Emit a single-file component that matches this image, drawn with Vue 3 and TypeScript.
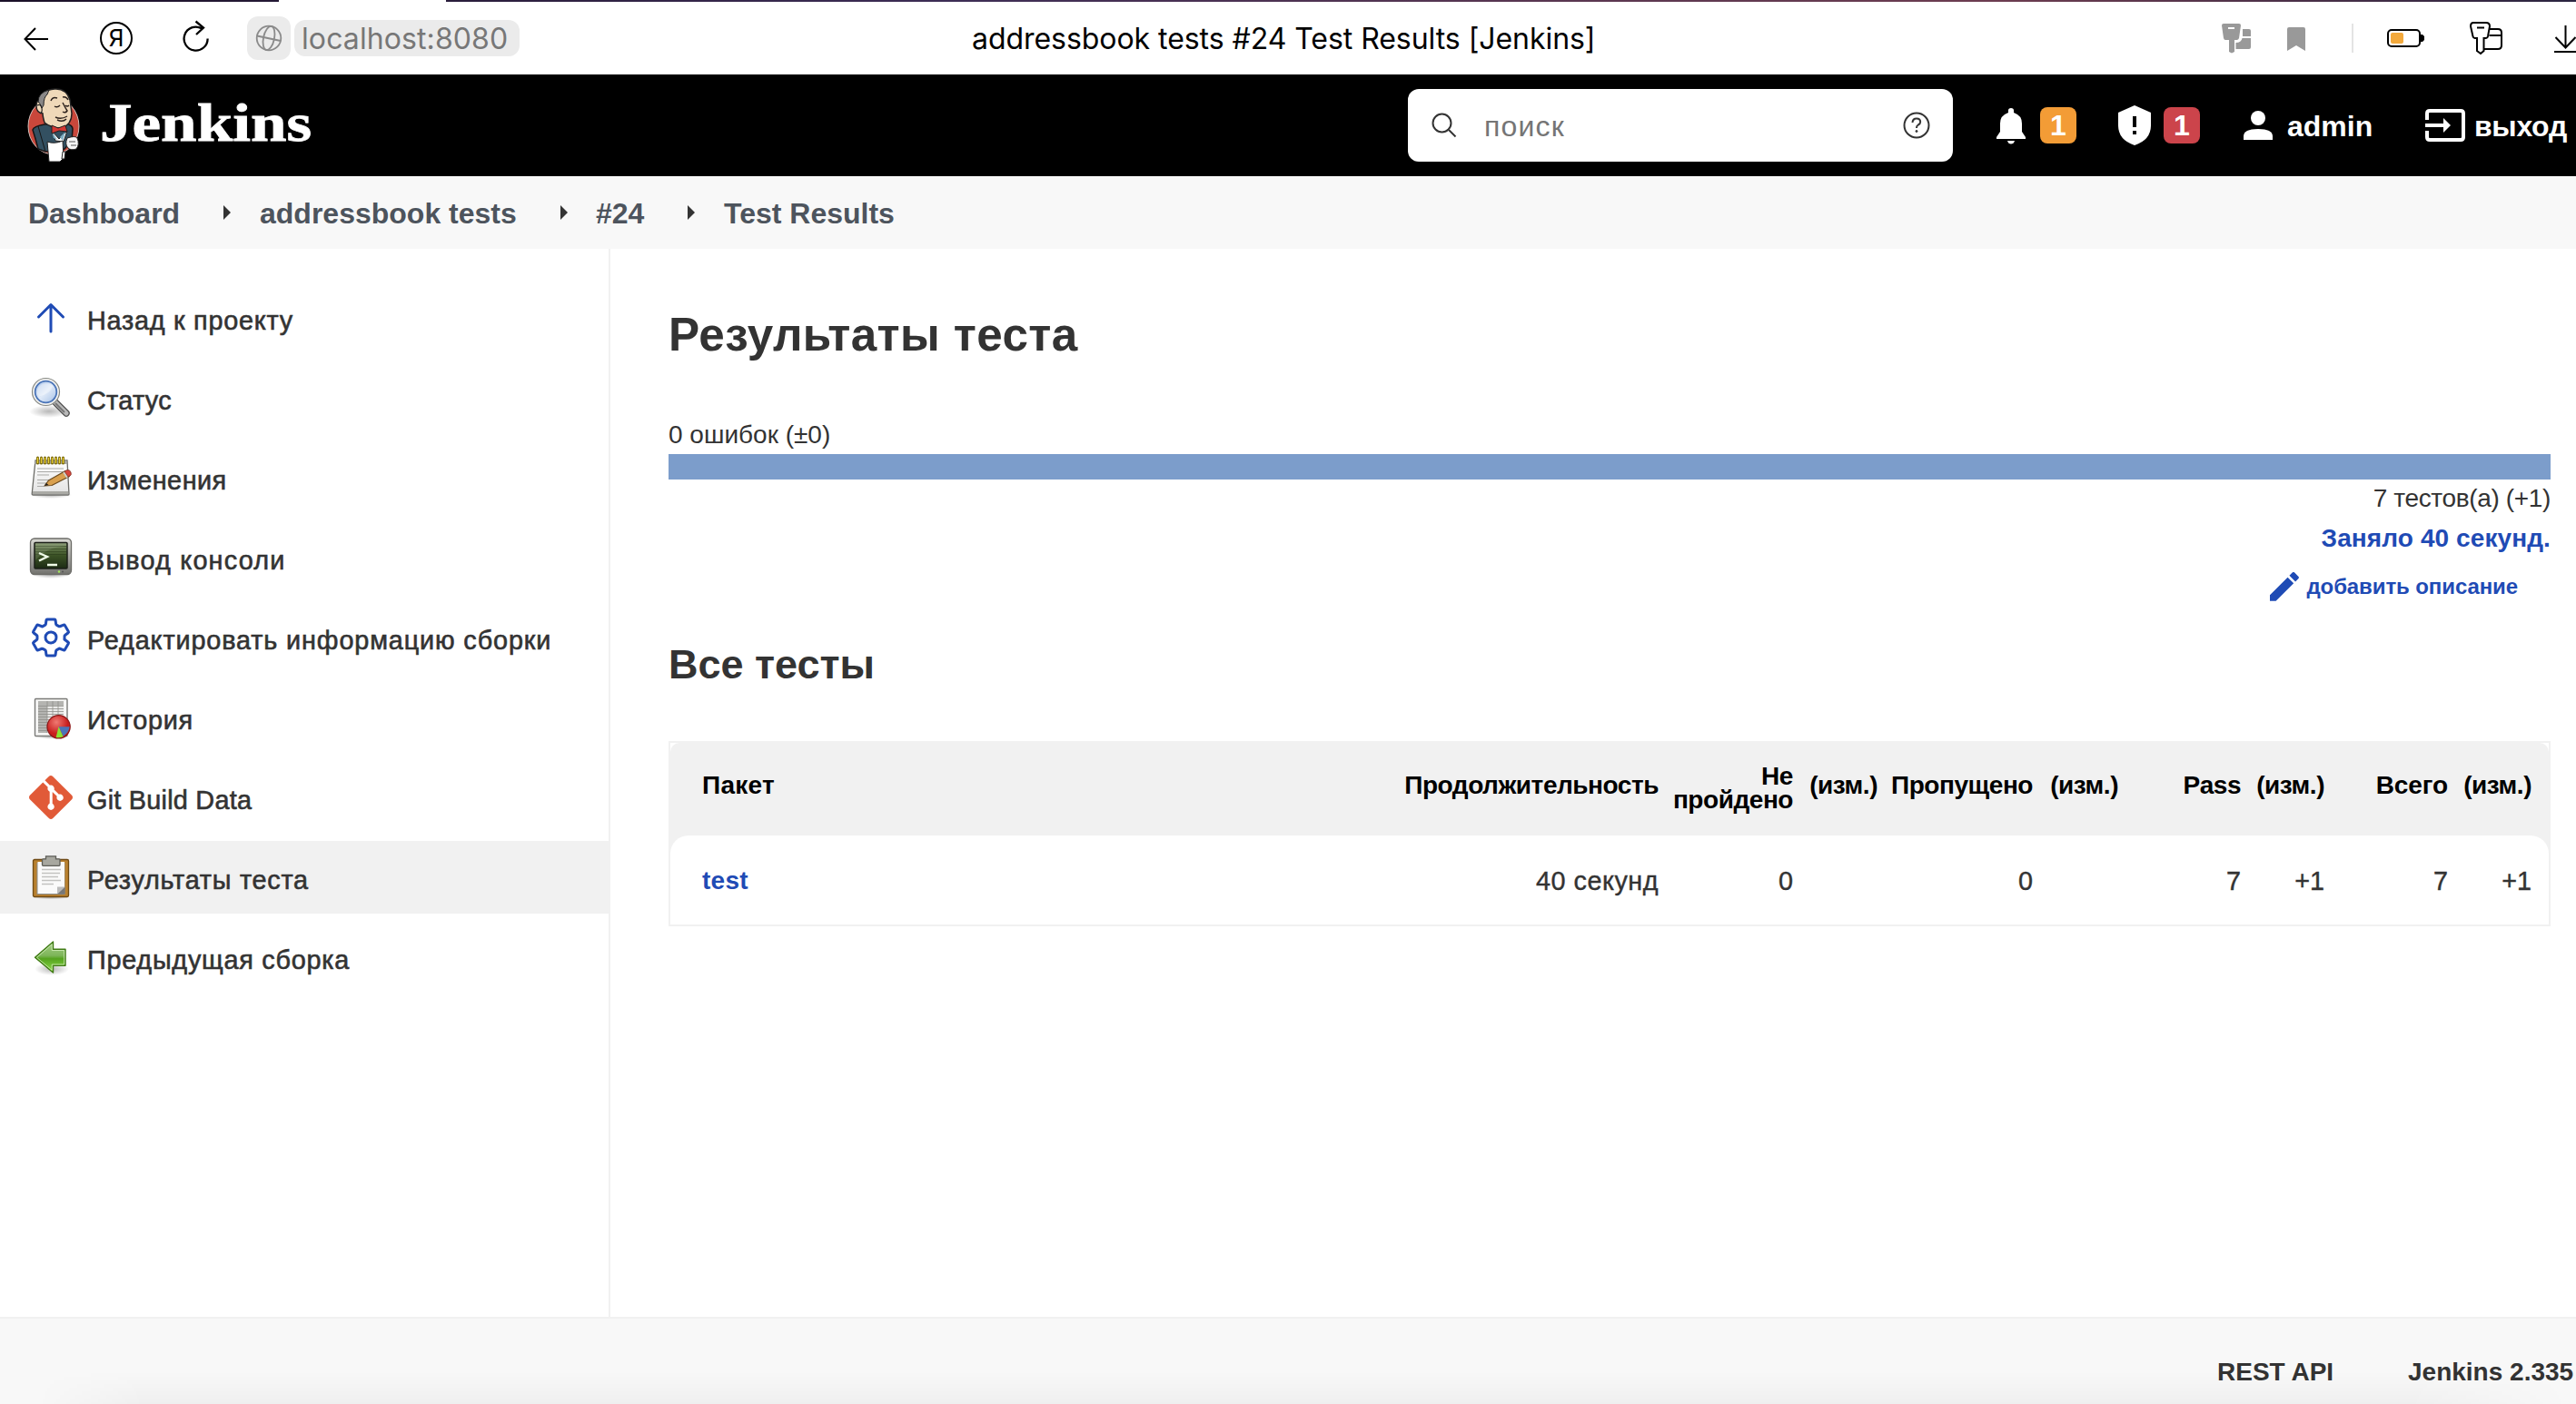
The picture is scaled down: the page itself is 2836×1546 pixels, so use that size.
<script setup lang="ts">
interface Task { id: string; label: string; active?: boolean }

const tasks: Task[] = [
  { id: 'up', label: 'Назад к проекту' },
  { id: 'search', label: 'Статус' },
  { id: 'notepad', label: 'Изменения' },
  { id: 'terminal', label: 'Вывод консоли' },
  { id: 'gear', label: 'Редактировать информацию сборки' },
  { id: 'graph', label: 'История' },
  { id: 'git', label: 'Git Build Data' },
  { id: 'clipboard', label: 'Результаты теста', active: true },
  { id: 'previous', label: 'Предыдущая сборка' },
]

const crumbs: string[] = ['Dashboard', 'addressbook tests', '#24', 'Test Results']
const heads: string[] = ['Пакет', 'Продолжительность', 'Не пройдено', '(изм.)', 'Пропущено', '(изм.)', 'Pass', '(изм.)', 'Всего', '(изм.)']
const row: string[] = ['test', '40 секунд', '0', '', '0', '', '7', '+1', '7', '+1']
</script>

<template>
  <div class="page">
    <div class="browser">
      <div class="strip"><i class="tab"></i></div>
      <svg class="b-back" width="28" height="26" viewBox="0 0 28 26"><path d="M27 13H2M13 1 1.500 13 13 25" fill="none" stroke="#000" stroke-width="2" /></svg>
      <div class="ya"><span>Я</span></div>
      <svg class="b-reload" width="30" height="36" viewBox="0 0 30 36"><path d="M27.600 20.500A13 13 0 1 1 21 9.300M14.500 1.500 23 8.500 15 16" fill="none" stroke="#000" stroke-width="2.300" /></svg>
      <div class="globe">
        <svg width="30" height="30" viewBox="0 0 30 30" fill="none" stroke="#8a8a8a" stroke-width="1.800"><circle cx="15" cy="15" r="13.300" /><ellipse cx="15" cy="15" rx="6" ry="13.300" transform="rotate(12 15 15)" /><path d="M2 12.500 28 18" /></svg>
      </div>
      <div class="url"><span>localhost:8080</span></div>
      <div class="title"><span>addressbook tests #24 Test Results [Jenkins]</span></div>
      <svg class="b-key" width="34" height="34" viewBox="0 0 34 34" fill="#999"><path fill-rule="evenodd" d="M3 1h17q2 0 2 2l-2 14q-.5 1.500-2 2h-3v13l-3 1.500-3-1.500V19H5q-1.500 0-2-2L1 3q0-2 2-2ZM8 5v2h7V5Z" /><path d="M24 7h7q2 0 2 2v6h-9zM16.500 22q6 0 7-5H33v10q0 2-2 2H16.500z" /></svg>
      <svg class="b-mark" width="20" height="26" viewBox="0 0 20 26"><path d="M2 0h16q2 0 2 2v24L10 20 0 26V2Q0 0 2 0Z" fill="#999" /></svg>
      <i class="b-div"></i>
      <svg class="b-bat" width="42" height="20" viewBox="0 0 42 20"><rect x="1" y="1" width="35" height="18" rx="4" fill="none" stroke="#000" stroke-width="2" /><rect x="4" y="4" width="14" height="12" rx="2" fill="#f3a93c" /><path d="M36 6h3l2 2v4l-2 2h-3z" /></svg>
      <svg class="b-keys" width="38" height="38" viewBox="0 0 38 38" fill="none" stroke="#000" stroke-width="2"><path d="M4 2h14q4 0 4 4l-2 11q-.5 2-2 2h-2.500v14L12 36l-4-3V19H5.500q-1.500 0-2-2L1 6q0-4 3-4ZM8 7.500h8" /><path d="M22 9h9q4 0 4 4v14q0 4-4 4H15.500M21.500 16H35" /></svg>
      <svg class="b-down" width="24" height="32" viewBox="0 0 24 32" fill="none" stroke="#000" stroke-width="2"><path d="M12.500 1v24M1.500 14l11 11.500L23.500 14M0 30h24" /></svg>
    </div>

    <header class="top">
      <svg class="butler" width="58" height="82" viewBox="0 0 58 82">
        <ellipse cx="29" cy="42" rx="28" ry="31" fill="#c9473b" stroke="#e9e4e0" stroke-width=".8" />
        <path d="M12 67Q9 55 6 46q1-4 13-6l24-1q7 2 7 6l-1 13-8 9-21 3Z" fill="#335061" stroke="#161616" stroke-width="1.500" />
        <path d="m12 42 8 28" stroke="#161616" fill="none" />
        <path d="M19 38Q17 31 17 28q-7-1-7-8 0-6 3-6Q15 2 30 1q13-1 17 12 1 7 2 15 0 12-11 16-12 0-19-6Z" fill="#efd9b9" stroke="#222" stroke-width="1.500" />
        <path d="M12 15Q12 5 24 2l-2 5q-4 3-4 12l-2 3q-2-6-4-7Z" fill="#8a8887" stroke="#222" />
        <path d="M11 19q4-2 5 3t-2 6" fill="none" stroke="#222" stroke-width="1.200" />
        <path d="M26 14q2-5 7-3M39 10q4-1 6 3M30 20q3 2 6-1M42 19q2 2 4 0M39 16q3 6 5 9-2 3-5 1M31 32q6 3 13-1M33 35q6 3 10-1" fill="none" stroke="#2b211c" stroke-width="1.400" />
        <path d="m27 47 8 9 9-9-4 12-9-1Z" fill="#f4f4f4" stroke="#222" /><path d="m27 48 6 9-4-2Z" fill="#81b0c4" /><path d="m42 48-3 10-3-4Z" fill="#81b0c4" />
        <path d="m27 41 7 3 8-3 2 7-9-1-8 3Z" fill="#d33833" stroke="#222" />
        <path d="M22 59q8 3 17-1l1 19-4 4H24Z" fill="#fff" stroke="#222" /><path d="M39 70h3l-1 8h-3zM44 55q9-3 11 0 3 7-1 12-6 2-9-1-4-4-1-11Z" fill="#f6f6f6" stroke="#222" /><path d="M46 59h7M48 63h6" stroke="#555" />
      </svg>
      <div class="brand"><span>Jenkins</span></div>
      <div class="search">
        <svg class="s-glass" width="28" height="28" viewBox="0 0 28 28" fill="none" stroke="#333" stroke-width="2"><circle cx="11.500" cy="11.500" r="10" /><path d="m19 19 7.500 7.500" /></svg>
        <span class="ph">поиск</span>
        <svg class="s-help" width="32" height="32" viewBox="0 0 32 32" fill="none" stroke="#333" stroke-width="2"><circle cx="16" cy="16" r="13.500" /><path d="M11.500 13q.3-4.500 4.500-4.500 4.200 0 4.200 3.700 0 2-2.400 3.300-1.900 1.100-1.800 3.500" /><circle cx="16" cy="22.500" r="1" fill="#333" stroke-width="1" /></svg>
      </div>
      <svg class="bell" width="32" height="40" viewBox="0 0 32 40" fill="#fff"><path d="M13 5V2.500q0-2.500 3-2.500t3 2.500V5q9 3 9 12v9l4 6v2H0v-2l4-6v-9Q4 8 13 5ZM12 36h8q-1 3.500-4 3.500T12 36Z" /></svg>
      <span class="badge orange">1</span>
      <svg class="shield" width="36" height="44" viewBox="0 0 36 44"><path d="M18 0 36 8v14q0 16-18 22Q0 38 0 22V8Z" fill="#fff" /><path d="M16 12h4v12h-4zM16 28h4v4h-4z" /></svg>
      <span class="badge red">1</span>
      <svg class="user" width="32" height="32" viewBox="0 0 32 32" fill="#fff"><circle cx="16" cy="8" r="8" /><path d="M0 32v-4q0-8 16-8t16 8v4Z" /></svg>
      <span class="who">admin</span>
      <svg class="exit" width="44" height="36" viewBox="0 0 44 36"><path d="M2 12V5q0-3 3-3h34q3 0 3 3v26q0 3-3 3H5q-3 0-3-3v-7M0 18h22" fill="none" stroke="#fff" stroke-width="4" /><path d="m20 10 8 8-8 8Z" fill="#fff" /></svg>
      <span class="out">выход</span>
    </header>

    <nav class="crumbs">
      <template v-for="(c, i) in crumbs" :key="c">
        <i v-if="i" class="caret"></i>
        <span class="crumb" :class="'c' + i">{{ c }}</span>
      </template>
    </nav>

    <div class="body">
      <aside>
        <div v-for="t in tasks" :key="t.id" class="task" :class="[t.id, { active: t.active }]">
          <svg width="48" height="48" viewBox="0 0 48 48">
            <defs>
              <linearGradient id="lens" x1="0" y1="0" x2="1" y2="1"><stop offset="0" stop-color="#a9c3e8" /><stop offset=".5" stop-color="#e0eaf8" /><stop offset="1" stop-color="#a4c0e6" /></linearGradient>
              <linearGradient id="paper" x1="0" y1="0" x2="0" y2="1"><stop offset="0" stop-color="#fff" /><stop offset="1" stop-color="#e2e2e2" /></linearGradient>
              <linearGradient id="frame" x1="0" y1="0" x2="0" y2="1"><stop offset="0" stop-color="#d8d8d2" /><stop offset="1" stop-color="#72726e" /></linearGradient>
              <linearGradient id="screen" x1="0" y1="0" x2="0" y2="1"><stop offset="0" stop-color="#7f9468" /><stop offset=".5" stop-color="#3b5225" /><stop offset="1" stop-color="#1c2b14" /></linearGradient>
              <linearGradient id="green" x1="0" y1="0" x2="0" y2="1"><stop offset="0" stop-color="#a8cf8c" /><stop offset=".45" stop-color="#7db558" /><stop offset=".55" stop-color="#55a31f" /><stop offset="1" stop-color="#8fe04a" /></linearGradient>
              <radialGradient id="shade"><stop offset="0" stop-color="#000" stop-opacity=".28" /><stop offset="1" stop-color="#000" stop-opacity="0" /></radialGradient>
              <radialGradient id="pie" cx=".4" cy=".3"><stop offset="0" stop-color="#ef7a72" /><stop offset="1" stop-color="#c81e1e" /></radialGradient>
            </defs>
            <path v-if="t.id === 'up'" d="M10.500 23 24 9.500 37.500 23M24 10v29" fill="none" stroke="#1f4bb5" stroke-width="3" stroke-linecap="round" stroke-linejoin="round" />
            <g v-else-if="t.id === 'search'">
              <ellipse cx="22" cy="39" rx="22" ry="7" fill="url(#shade)" />
              <path d="m29 29 12 12" stroke="#555" stroke-width="7.500" stroke-linecap="round" /><path d="m29 29 12 12" stroke="#b9b9b9" stroke-width="5" stroke-linecap="round" /><path d="m29 30 10 10" stroke="#777" stroke-width="2" />
              <circle cx="18.500" cy="17.500" r="15" fill="#f3f3f1" stroke="#888a85" stroke-width="1.200" /><circle cx="18.500" cy="17.500" r="11.800" fill="url(#lens)" stroke="#4a74b8" stroke-width="1.800" />
              <path d="M9 18q0-9 9-9.500 7 0 8 3-2 8-15 11-2-2-2-4.500Z" fill="#fff" opacity=".35" />
            </g>
            <g v-else-if="t.id === 'notepad'">
              <ellipse cx="24" cy="43" rx="23" ry="4" fill="url(#shade)" />
              <path d="M7 5h35l2 37q0 1-1 1H4.500q-1.500 0-1.300-1.500Z" fill="url(#paper)" stroke="#6d6d69" stroke-width="1.300" /><path d="M6.500 5.500h35.500v3.500H6.300Z" fill="#a5a59f" /><path d="M4 39h39v3H4Z" fill="#aaaaa5" />
              <path d="M9 14h29M9 17.500h29M9 21h13M9 26.500h22M9 30h20M9 33.500h8" stroke="#a9a9a6" stroke-width="1" />
              <path d="M9.500 2v6M13.500 2v6M17.500 2v6M21.500 2v6M25.500 2v6M29.500 2v6M33.500 2v6M37.500 2v6" stroke="#7d6a08" stroke-width="3" stroke-linecap="round" /><path d="M9.500 2v6M13.500 2v6M17.500 2v6M21.500 2v6M25.500 2v6M29.500 2v6M33.500 2v6M37.500 2v6" stroke="#e7cf3c" stroke-width="1.300" />
              <path d="m17 33 4.500-6L40 16.500l4.500 6L25 32.500Z" fill="#d9a04e" stroke="#6b4a1e" stroke-width="1.200" stroke-linejoin="round" /><path d="m39 17 3-1.500q3-.5 4 2.500t-1 4l-2 1Z" fill="#d8453c" stroke="#7c3324" stroke-width=".8" /><path d="m38 18 4 6" stroke="#ccc" stroke-width="1.800" /><path d="m17 33 2-3 2.500 2Z" fill="#222" />
            </g>
            <g v-else-if="t.id === 'terminal'">
              <ellipse cx="24" cy="43" rx="21" ry="4" fill="url(#shade)" />
              <rect x="1.500" y="3" width="45" height="39.500" rx="4.500" fill="url(#frame)" stroke="#6b6b67" stroke-width="1.300" />
              <rect x="6" y="7.500" width="36" height="28.500" rx="1" fill="url(#screen)" stroke="#1b1f18" stroke-width="1.500" />
              <path d="M7 11.500h34M7 14.500h34M7 17.500h34M7 20.500h34" stroke="#233514" stroke-width=".8" opacity=".6" /><path d="M7 27Q20 12 41 11V8H7Z" fill="#fff" opacity=".1" />
              <path d="m11 19 9 4-9 4.500M20 32h11" fill="none" stroke="#effbe8" stroke-width="2.400" /><circle cx="33" cy="39.500" r="1.200" fill="#a5ea5a" /><circle cx="37" cy="39.500" r="1" fill="#555" />
            </g>
            <svg v-else-if="t.id === 'gear'" width="48" height="48" viewBox="0 0 512 512" fill="none" stroke="#1f4bb5" stroke-width="32" stroke-linecap="round" stroke-linejoin="round"><path d="M262.290 192.310a64 64 0 1057.400 57.400 64.130 64.130 0 00-57.400-57.400zM416.390 256a154.340 154.340 0 01-1.530 20.790l45.210 35.460a10.810 10.810 0 012.450 13.750l-42.770 74a10.810 10.810 0 01-13.140 4.590l-44.900-18.080a16.110 16.110 0 00-15.170 1.750A164.480 164.480 0 01325 400.800a15.940 15.940 0 00-8.820 12.140l-6.730 47.890a11.080 11.080 0 01-10.680 9.170h-85.540a11.110 11.110 0 01-10.690-8.870l-6.720-47.820a16.070 16.070 0 00-9-12.220 155.300 155.300 0 01-21.460-12.570 16 16 0 00-15.110-1.710l-44.890 18.070a10.810 10.810 0 01-13.140-4.580l-42.770-74a10.800 10.800 0 012.450-13.750l38.210-30a16.050 16.050 0 006-14.080c-.36-4.170-.58-8.330-.58-12.500s.21-8.270.58-12.350a16 16 0 00-6.070-13.940l-38.190-30A10.810 10.810 0 0149.480 186l42.770-74a10.810 10.810 0 0113.140-4.590l44.900 18.080a16.110 16.110 0 0015.170-1.750A164.480 164.480 0 01187 111.200a15.940 15.940 0 008.820-12.140l6.730-47.890A11.080 11.080 0 01213.230 42h85.540a11.110 11.110 0 0110.690 8.870l6.720 47.820a16.070 16.070 0 009 12.220 155.300 155.300 0 0121.460 12.570 16 16 0 0015.110 1.710l44.890-18.070a10.810 10.810 0 0113.140 4.580l42.770 74a10.800 10.800 0 01-2.450 13.750l-38.210 30a16.050 16.050 0 00-6.050 14.080c.33 4.140.55 8.300.55 12.470z" /></svg>
            <g v-else-if="t.id === 'graph'">
              <ellipse cx="26" cy="45" rx="19" ry="3" fill="url(#shade)" />
              <rect x="6.500" y="3.500" width="35.500" height="41" rx="1" fill="#f6f6f5" stroke="#7b7b78" stroke-width="1.400" />
              <rect x="10" y="6" width="28" height="35" fill="#e9e9e7" /><path d="M10 6h28v5H10zM10 6h10v35H10z" fill="#b4b4b1" />
              <path d="M10 11.500h28M10 14.500h28M10 17.500h28M10 20.500h28M10 23.500h28M10 26.500h28M10 29.500h28M10 32.500h28M10 35.500h28M10 38.500h28M20 6v35M26 6v35M32 6v35" stroke="#8f8f8c" stroke-width=".8" />
              <circle cx="32.600" cy="34.300" r="12.600" fill="url(#pie)" stroke="#8a1414" stroke-width="1.200" /><path d="M32.600 34.300h12q-.5 6-7 10.500Z" fill="#4a74b8" /><path d="m32.600 34.300 5 11q-4 1.500-8 .8Z" fill="#8ae234" />
            </g>
            <path v-else-if="t.id === 'git'" transform="scale(2)" fill="#e15a38" d="M23.546 10.930L13.067.452c-.604-.603-1.582-.603-2.188 0L8.708 2.627l2.760 2.760c.645-.215 1.379-.070 1.889.441.516.515.658 1.258.438 1.900l2.658 2.660c.645-.223 1.387-.078 1.900.435.721.72.721 1.884 0 2.604-.719.719-1.881.719-2.600 0-.539-.541-.674-1.337-.404-1.996L12.860 8.955v6.525c.176.086.342.203.488.348.713.721.713 1.883 0 2.600-.719.721-1.889.721-2.609 0-.719-.719-.719-1.879 0-2.598.182-.18.387-.316.605-.406V8.835c-.217-.091-.424-.222-.6-.401-.545-.545-.676-1.342-.396-2.009L7.636 3.700.45 10.881c-.6.605-.6 1.584 0 2.189l10.480 10.477c.604.604 1.582.604 2.186 0l10.430-10.430c.605-.603.605-1.582 0-2.187" />
            <g v-else-if="t.id === 'clipboard'">
              <ellipse cx="24" cy="46" rx="20" ry="2.500" fill="url(#shade)" />
              <rect x="4.500" y="4.500" width="39" height="41" rx="1.500" fill="#b9812f" stroke="#6f4a14" stroke-width="1.300" />
              <path d="M8.500 8h31v35h-31Z" fill="#8b8b88" /><path d="M9.500 7h29.500v35H9.500Z" fill="#fafafa" />
              <path d="M31 34.500h8.500L31 42.500Z" fill="#bbb" /><path d="M39.500 34.500v8H31Z" fill="#777" />
              <path d="M14 15.500h21M14 19.500h20M14 23.500h18M14 27.500h21M14 31.500h13" stroke="#c2c2c0" stroke-width="1.600" />
              <path d="M18.500.8h11v3h3.500q1 0 1 1v5.500q0 1-1 1H15.500q-1 0-1-1V4.800q0-1 1-1h3Z" fill="#a8a8a0" stroke="#5e5e58" stroke-width="1.300" />
            </g>
            <g v-else>
              <ellipse cx="25" cy="37" rx="19" ry="7" fill="url(#shade)" />
              <path d="M6.500 24.300 26.500 7v8.200H40v18H26.500V41Z" fill="url(#green)" stroke="#3f7a14" stroke-width="1.400" stroke-linejoin="round" /><path d="M8.500 24.300 25.200 9.800v6.700h13.500v15.500H25.200v6.300Z" fill="none" stroke="#d3f0ba" stroke-width="1" opacity=".8" />
            </g>
          </svg>
          <span>{{ t.label }}</span>
        </div>
      </aside>

      <main>
        <h1><span>Результаты теста</span></h1>
        <div class="fails"><span>0 ошибок (±0)</span></div>
        <div class="bar"></div>
        <div class="total"><span>7 тестов(а) (+1)</span></div>
        <div class="took"><span>Заняло 40 секунд.</span></div>
        <div class="desc">
          <svg width="32" height="32" viewBox="3 3 18.100 18.100" fill="#1f4bb5"><path d="M3 17.250V21h3.750L17.810 9.940l-3.750-3.750L3 17.250zM20.710 7.040a1 1 0 0 0 0-1.410l-2.340-2.340a1 1 0 0 0-1.410 0l-1.830 1.830 3.750 3.750 1.830-1.830z" /></svg>
          <span>добавить описание</span>
        </div>
        <h2><span>Все тесты</span></h2>
        <div class="table">
          <div class="thead grid"><div v-for="(h, i) in heads" :key="i" class="cell"><span>{{ h }}</span></div></div>
          <div class="trow grid"><div v-for="(v, i) in row" :key="i" class="cell"><span>{{ v }}</span></div></div>
        </div>
      </main>
    </div>

    <footer>
      <span class="rest">REST API</span><span class="ver">Jenkins 2.335</span>
      <i class="glow"></i>
    </footer>
  </div>
</template>

<style>
body { margin: 0; background: #fff; }
</style>

<style scoped>
* { box-sizing: border-box; }
.page { width: 2836px; height: 1546px; overflow: hidden; display: flex; flex-direction: column; font-family: "Liberation Sans", Arial, sans-serif; color: #333; white-space: nowrap; }
svg { display: block; flex: none; }
.browser { position: relative; flex: none; height: 82px; display: flex; align-items: flex-start; font-family: Inter, sans-serif; background: #fff; }
.strip { position: absolute; left: 0; top: 0; width: 100%; height: 2px; background: linear-gradient(90deg, #1a1028 0, #2a1d3c 500px, #3d2d55 1040px, #5d3850 1800px, #6d3d50 2200px, #2a2440 2836px); }
.tab { display: block; width: 184px; height: 2px; margin-left: 307px; background: #fff; }
.b-back { margin: 30px 0 0 26px; }
.ya { width: 36px; height: 36px; margin: 24px 0 0 56px; border: 2px solid #000; border-radius: 50%; display: flex; justify-content: center; font: 26px/31px Inter, sans-serif; color: #000; }
.b-reload { margin: 22px 0 0 55px; }
.globe { width: 48px; height: 48px; margin: 18px 0 0 41px; border-radius: 12px; background: #ebebeb; display: flex; align-items: center; justify-content: center; }
.url { width: 248px; height: 40px; margin: 22px 0 0 4px; border-radius: 12px; background: #ebebeb; color: #777; font-size: 32px; line-height: 42px; padding-left: 8px; letter-spacing: .1px; }
.title { width: 699px; margin: 22px 0 0 498px; font-size: 32px; line-height: 42px; color: #000; letter-spacing: -.05px; }
.b-key { margin: 25px 0 0 676px; }
.b-mark { margin: 30px 0 0 39px; }
.b-div { width: 2px; height: 32px; margin: 26px 0 0 51px; background: #e4e4e4; }
.b-bat { margin: 32px 0 0 37px; }
.b-keys { margin: 23px 0 0 49px; }
.b-down { margin: 27px 0 0 55px; }

.top { flex: none; height: 112px; background: #000; color: #fff; display: flex; align-items: flex-start; font-size: 32px; font-weight: 700; }
.butler { margin: 15px 0 0 30px; }
.brand { width: 1439px; padding-left: 22px; font: 700 60px/80px "Liberation Serif", serif; margin-top: 13px; }
.brand span { display: inline-block; transform: scaleX(1.185); transform-origin: 0 50%; -webkit-text-stroke: .8px #fff; }
.search { width: 600px; height: 80px; margin: 16px 0 0 23px; border-radius: 12px; background: #fff; display: flex; align-items: center; font-weight: 400; }
.s-glass { margin-left: 26px; }
.ph { width: 490px; padding-left: 30px; line-height: 80px; color: #757575; padding-top: 2px; letter-spacing: 1.2px; }
.bell { margin: 37px 0 0 48px; }
.badge { width: 40px; height: 40px; margin: 36px 0 0 16px; border-radius: 8px; text-align: center; line-height: 41px; }
.orange { background: #f39c36; }
.red { background: #cc444b; margin-left: 14px; }
.shield { margin: 34px 0 0 46px; }
.user { margin: 40px 0 0 48px; }
.who { width: 152px; padding-left: 16px; line-height: 114px; }
.exit { margin: 38px 0 0 16px; }
.out { padding-left: 10px; line-height: 114px; letter-spacing: -.3px; }

.crumbs { flex: none; height: 80px; background: #f8f8f8; display: flex; align-items: center; font-size: 32px; font-weight: 700; color: #4d545d; }
.crumb { line-height: 80px; padding-top: 2px; }
.c0 { padding-left: 31px; width: 246px; }
.c1 { width: 363px; padding-left: 32px; }
.c2 { width: 132px; padding-left: 31px; }
.c3 { padding-left: 32px; }
.caret { width: 8px; height: 16px; background: #333; clip-path: polygon(0 0, 100% 50%, 0 100%); }

.body { flex: none; height: 1176px; display: flex; background: #fff; }
aside { width: 672px; border-right: 2px solid #f1f1f1; padding-top: 36px; display: flex; flex-direction: column; gap: 8px; }
.task { height: 80px; padding-left: 32px; display: flex; align-items: center; gap: 16px; font-size: 28.8px; letter-spacing: .75px; }
.task span { line-height: 80px; padding-top: 5px; -webkit-text-stroke: .6px #333; }
.task.search { width: auto; height: 80px; margin: 0; border-radius: 0; font-weight: 400; letter-spacing: .3px; }
.task.notepad { letter-spacing: .5px; }
.task.terminal { letter-spacing: 1.2px; }
.task.gear { letter-spacing: .87px; }
.task.git { letter-spacing: .25px; }
.task.active { background: #f1f1f1; }

main { width: 2136px; padding-left: 64px; }
h1 { margin: 62px 0 0; font-size: 51.2px; line-height: 65px; height: 64px; letter-spacing: .4px; }
.fails { margin-top: 60px; height: 40px; font-size: 28px; line-height: 37px; }
.bar { height: 28px; background: #7c9dcb; }
.total { height: 42px; text-align: right; font-size: 28px; line-height: 41px; letter-spacing: -.35px; }
.took { height: 44px; text-align: right; font-size: 28px; font-weight: 700; color: #1f4bb5; line-height: 46px; letter-spacing: .1px; }
.desc { height: 64px; display: flex; align-items: center; justify-content: flex-end; padding-right: 36px; gap: 8px; font-size: 24px; font-weight: 700; color: #1f4bb5; letter-spacing: -.1px; }
h2 { margin: 24px 0 0; font-size: 45px; line-height: 60px; height: 60px; }
.table { height: 204px; margin-top: 54px; border: 2px solid #f1f1f1; background: linear-gradient(#fff, #fff) 0 0 / 100% 20px no-repeat, #f1f1f1; font-size: 28px; }
.grid { display: grid; grid-template-columns: 790px 307px 148px 93px 171px 94px 135px 92px 136px 102px; }
.cell { display: flex; align-items: center; justify-content: flex-end; text-align: right; padding-right: 9px; }
.cell:first-child { justify-content: flex-start; padding-left: 35px; }
.cell:last-child { padding-right: 19px; }
.thead { height: 102px; font-weight: 700; color: #000; line-height: 26px; background: #f1f1f1; border-radius: 10px 10px 0 0; letter-spacing: -.45px; }
.thead .cell { padding-bottom: 9px; }
.thead .cell:nth-child(3) { white-space: normal; padding-bottom: 3px; }
.thead .cell:first-child { letter-spacing: .3px; }
.thead .cell:nth-child(9) { letter-spacing: -.1px; }
.trow { height: 98px; background: #fff; border-radius: 20px 20px 0 0; padding-top: 2px; font-size: 28.8px; -webkit-text-stroke: .4px #333; }
.trow .cell:nth-child(2) { letter-spacing: .5px; }
.trow .cell:first-child { font-size: 28px; font-weight: 700; color: #1f4bb5; -webkit-text-stroke: 0; letter-spacing: .3px; }

footer { position: relative; flex: none; height: 96px; background: #f8f8f8; border-top: 2px solid #f1f1f1; display: flex; font-size: 28px; font-weight: 700; }
footer span { line-height: 118px; }
.rest { padding-left: 2441px; width: 2651px; }
.glow { position: absolute; left: 0; right: 0; bottom: 0; height: 36px; background: linear-gradient(180deg, rgba(0,0,0,0), rgba(0,0,0,.035)); mask-image: linear-gradient(90deg, transparent 40px, #000 160px, #000 2650px, transparent 2830px); }
</style>
